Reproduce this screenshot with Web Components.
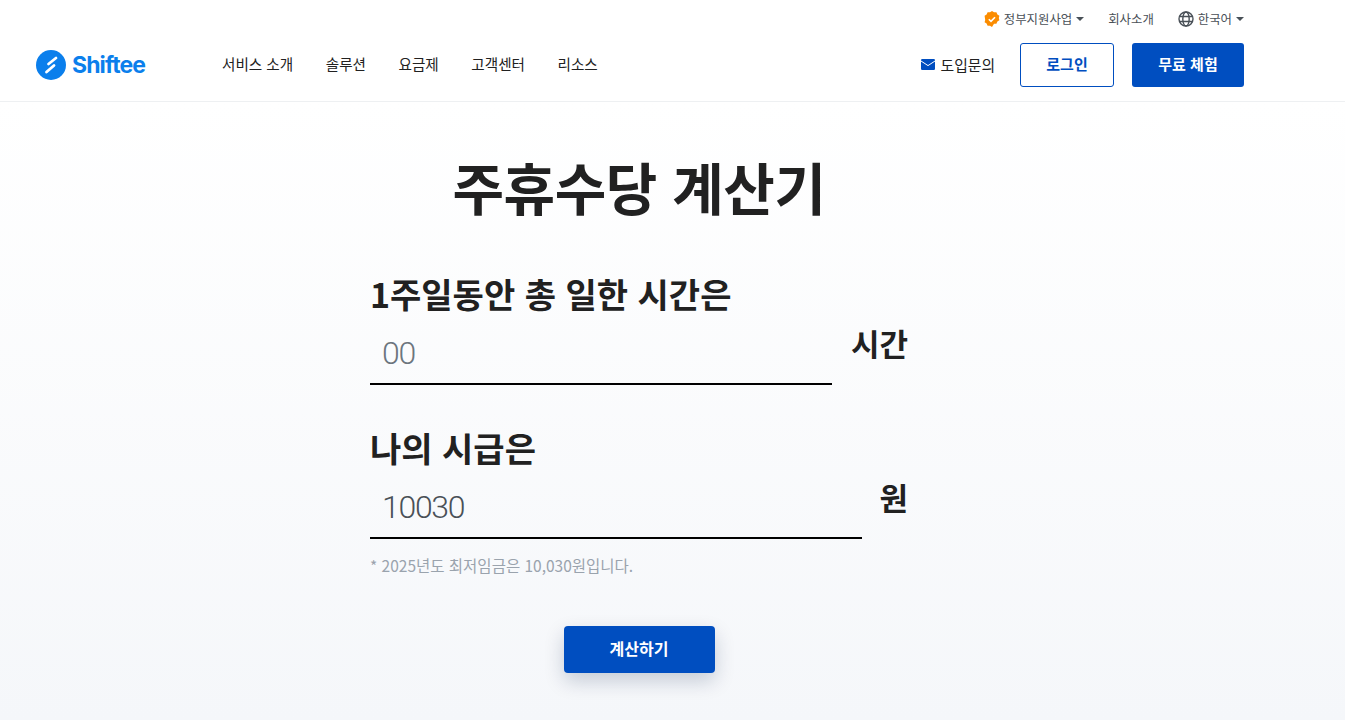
<!DOCTYPE html>
<html lang="ko">
<head>
<meta charset="utf-8">
<title>주휴수당 계산기</title>
<style>
    html, body { margin: 0; height: 100%; }
    body {
        font-family: "Noto Sans CJK KR", "Liberation Sans", sans-serif;
        color: #212121;
        background: #fff;
    }
</style>
</head>
<body>
<site-header></site-header>
<calc-page>
    <calc-field label="1주일동안 총 일한 시간은" unit="시간" placeholder="00" width="462"></calc-field>
    <calc-field label="나의 시급은" unit="원" value="10030" width="492" note="* 2025년도 최저임금은 10,030원입니다."></calc-field>
</calc-page>

<script>
class SiteHeader extends HTMLElement {
    constructor() {
        super();
        const shadow = this.attachShadow({ mode: "open" });
        const caret = /* html */ `<svg class="caret" width="8" height="4" viewBox="0 0 8 4"><path d="M0 0h8L4 4z" fill="#495057"/></svg>`;
        shadow.innerHTML = /* html */ `
            <style>
                :host {
                    display: block;
                    height: 102px;
                    box-sizing: border-box;
                    background: #fff;
                    border-bottom: 1px solid #eef0f2;
                    padding: 0 101px 0 36px;
                }
                .top {
                    height: 37px;
                    display: flex;
                    justify-content: flex-end;
                    align-items: center;
                    gap: 24px;
                    font-size: 12.4px;
                    color: #495057;
                }
                .top a { display: flex; align-items: center; gap: 4px; }
                .main { height: 50px; padding-top: 6px; box-sizing: border-box; display: flex; align-items: center; }
                .logo { display: flex; align-items: center; gap: 6px; width: 186px; margin-top: -1px; }
                .logo span {
                    font: 700 23px/30px Inter, "Liberation Sans", sans-serif;
                    letter-spacing: -.9px;
                    color: #0b7fec;
                }
                nav { display: flex; gap: 32.5px; font-size: 14.6px; line-height: 20px; margin-top: -3px; color: #212121; }
                .right { margin-left: auto; display: flex; align-items: center; font-size: 15px; }
                .contact { display: flex; align-items: center; gap: 6px; font-size: 14.8px; margin-right: 25px; margin-top: -2px; color: #212121; }
                .btn {
                    box-sizing: border-box;
                    height: 44px;
                    display: flex;
                    align-items: center;
                    justify-content: center;
                    border-radius: 3px;
                    font-weight: 700;
                    padding-bottom: 4px;
                }
                .login { width: 94px; border: 1px solid #004ec0; color: #004ec0; margin-right: 18px; }
                .trial { width: 112px; background: #004ec0; color: #fff; }
            </style>
            <div class="top">
                <a>
                    <svg width="16" height="16" viewBox="0 0 16 16">
                        <path d="M8 0l2 1.3 2.4-.1 1 2.2 2 1.3-.6 2.3.6 2.3-2 1.3-1 2.2-2.4-.1L8 16l-2-1.3-2.4.1-1-2.2-2-1.3.6-2.3L.6 4.7l2-1.3 1-2.2L6 1.3z" fill="#fb8c00"/>
                        <path d="M4.8 8.2l2.2 2.2 4-4.2" fill="none" stroke="#fff" stroke-width="1.6"/>
                    </svg>
                    정부지원사업 ${caret}
                </a>
                <a>회사소개</a>
                <a>
                    <svg width="16" height="16" viewBox="0 0 16 16" fill="none" stroke="#495057" stroke-width="1.4">
                        <circle cx="8" cy="8" r="7"/>
                        <ellipse cx="8" cy="8" rx="3.2" ry="7"/>
                        <path d="M1.4 5.5h13.2M1.4 10.5h13.2"/>
                    </svg>
                    한국어 ${caret}
                </a>
            </div>
            <div class="main">
                <div class="logo">
                    <svg width="30" height="30" viewBox="0 0 30 30">
                        <circle cx="15" cy="15" r="15" fill="#0b7fec"/>
                        <path d="M20 8l-7.500 6M18 15.500l-7.500 6.500" stroke="#fff" stroke-width="2.800" stroke-linecap="round" fill="none"/>
                    </svg>
                    <span>Shiftee</span>
                </div>
                <nav>
                    <a>서비스 소개</a><a>솔루션</a><a>요금제</a><a>고객센터</a><a>리소스</a>
                </nav>
                <div class="right">
                    <a class="contact">
                        <svg width="14" height="11" viewBox="0 0 14 11">
                            <rect width="14" height="11" rx="1.2" fill="#004ec0"/>
                            <path d="M0 2l7 4.6L14 2" fill="none" stroke="#fff" stroke-width="1"/>
                        </svg>
                        도입문의
                    </a>
                    <a class="btn login">로그인</a>
                    <a class="btn trial">무료 체험</a>
                </div>
            </div>
        `;
    }
}

class CalcPage extends HTMLElement {
    constructor() {
        super();
        const shadow = this.attachShadow({ mode: "open" });
        shadow.innerHTML = /* html */ `
            <style>
                :host {
                    display: block;
                    height: 618px;
                    box-sizing: border-box;
                    padding: 44px 67px 0 0;
                    background: linear-gradient(#fff, #f5f7fa);
                }
                .wrap { width: 538px; margin: 0 auto; display: flex; flex-direction: column; align-items: stretch; }
                h1 {
                    margin: 0 0 46px;
                    font-size: 56px;
                    line-height: 80px;
                    font-weight: 700;
                    letter-spacing: -.4px;
                    text-align: center;
                    white-space: nowrap;
                }
                button {
                    align-self: center;
                    margin-top: 51px;
                    width: 151px;
                    height: 47px;
                    padding-bottom: 4px;
                    border: 0;
                    border-radius: 4px;
                    background: #004ec0;
                    color: #fff;
                    font: 700 16px "Noto Sans CJK KR", sans-serif;
                    box-shadow: 0 8px 20px rgba(0, 30, 70, .2);
                }
            </style>
            <div class="wrap">
                <h1>주휴수당 계산기</h1>
                <slot></slot>
                <button type="button">계산하기</button>
            </div>
        `;
    }
}

class CalcField extends HTMLElement {
    connectedCallback() {
        const shadow = this.attachShadow({ mode: "open" });
        const value = this.getAttribute("value") || "";
        const placeholder = this.getAttribute("placeholder") || "";
        const note = this.getAttribute("note");
        shadow.innerHTML = /* html */ `
            <style>
                :host { display: block; margin-bottom: 41px; }
                :host(:last-of-type) { margin-bottom: 0; }
                label { display: block; font-size: 34px; line-height: 46px; font-weight: 700; margin-top: -1px; margin-bottom: 1px; }
                .row { display: flex; justify-content: space-between; align-items: flex-start; }
                input {
                    box-sizing: border-box;
                    width: ${this.getAttribute("width")}px;
                    height: 67px;
                    padding: 4px 12px 0;
                    border: 0;
                    border-bottom: 2px solid #000;
                    background: transparent;
                    outline: 0;
                    font: 300 32px Roboto, "Liberation Sans", sans-serif;
                    letter-spacing: -1.3px;
                    color: #495057;
                }
                input::placeholder { color: #6c757d; opacity: 1; }
                .unit { font-size: 31px; line-height: 50px; font-weight: 700; }
                .note { margin-top: 15px; margin-bottom: -1px; font-size: 15.5px; line-height: 22px; color: #9aa3ad; }
            </style>
            <label>${this.getAttribute("label")}</label>
            <div class="row">
                <input type="text" value="${value}" placeholder="${placeholder}">
                <span class="unit">${this.getAttribute("unit")}</span>
            </div>
            ${note ? `<div class="note">${note}</div>` : ""}
        `;
    }
}

customElements.define("site-header", SiteHeader);
customElements.define("calc-page", CalcPage);
customElements.define("calc-field", CalcField);
</script>
</body>
</html>
